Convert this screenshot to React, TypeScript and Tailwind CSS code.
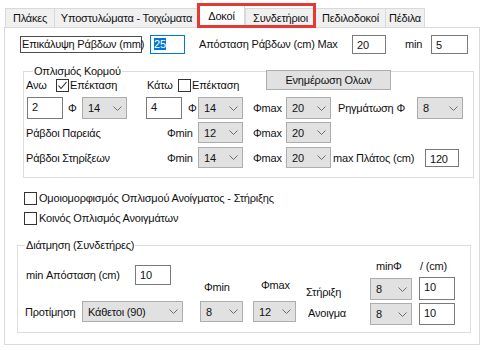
import React from 'react';

const Sel = ({ value, size }: { value: string; size: string }) => (
  <div className={`${size} flex items-center justify-between bg-[#e1e1e1] border border-[#adadad] pl-[5px] pr-[4px] shrink-0`}>
    <span>{value}</span>
    <svg width="9" height="5" viewBox="0 0 9 5">
      <polyline points="0.5,0.5 4.5,4.5 8.5,0.5" fill="none" stroke="#6d6d6d" strokeWidth="1" />
    </svg>
  </div>
);

const Inp = ({ value, size }: { value: string; size: string }) => (
  <div className={`${size} bg-white border border-[#7a7a7a] pl-[4px] pt-[2px] shrink-0`}>{value}</div>
);

const Chk = ({ checked = false }: { checked?: boolean }) => (
  <div className="w-[13px] h-[13px] border border-[#333] bg-white shrink-0 flex items-center justify-center">
    {checked && (
      <svg width="11" height="11" viewBox="0 0 11 11">
        <polyline points="1.5,5.5 4,8.5 9.5,2" fill="none" stroke="#222" strokeWidth="1.1" />
      </svg>
    )}
  </div>
);

const tabs = [
  { label: 'Πλάκες', w: 'w-[49px]' },
  { label: 'Υποστυλώματα - Τοιχώματα', w: 'w-[144px]' },
  { label: 'Δοκοί', w: 'w-[47px]', active: true },
  { label: 'Συνδετήριοι', w: 'w-[70px]' },
  { label: 'Πεδιλοδοκοί', w: 'w-[70px]' },
  { label: 'Πέδιλα', w: 'w-[40px]', last: true },
];

export default function App() {
  return (
    <div className="relative w-[486px] h-[350px] overflow-hidden whitespace-nowrap bg-white text-[11px] leading-[14px] tracking-[-0.2px] text-[#111] font-['Liberation_Sans',Arial,sans-serif]">
      {/* tab strip */}
      <div className="flex items-end h-[27px] pl-[5px]">
        {tabs.map(t =>
          t.active ? (
            <div key={t.label} className={`${t.w} relative z-10 h-[23px] -mb-px bg-white border-x border-t border-[#d9d9d9] flex items-center justify-center pb-[3px]`}>
              {t.label}
            </div>
          ) : (
            <div key={t.label} className={`${t.w} h-[19px] bg-[#f0f0f0] border-t border-l border-[#d9d9d9] ${t.last ? 'border-r' : ''} flex items-center justify-center`}>
              {t.label}
            </div>
          )
        )}
      </div>

      {/* panel */}
      <div className="ml-[4px] w-[476px] h-[318px] border border-[#d9d9d9] bg-white">
        <div className="flex items-center mt-[7px] h-[18px]">
          <div className="ml-[15px] w-[122px] h-[17px] border border-[#4d4d4d] leading-[15px] pl-[1px]">Επικάλυψη Ράβδων (mm)</div>
          <div className="ml-[8px] w-[35px] h-[19px] border border-[#0078d7] pl-[3px] pt-[1px]">
            <span className="bg-[#0078d7] text-white">25</span>
          </div>
          <div className="ml-[14px] w-[153px]">Απόσταση Ράβδων (cm) Max</div>
          <Inp value="20" size="w-[34px] h-[19px]" />
          <div className="ml-[19px] w-[26px]">min</div>
          <Inp value="5" size="w-[37px] h-[19px]" />
        </div>

        {/* Οπλισμός Κορμού */}
        <div className="relative ml-[18px] mt-[18px] w-[451px] h-[107px] border border-[#dcdcdc]">
          <div className="absolute left-[9px] -top-[8px] bg-white px-[1px]">Οπλισμός Κορμού</div>

          <div className="flex items-center h-[14px] mt-[6px]">
            <div className="ml-[2px] w-[30px]">Ανω</div>
            <Chk checked />
            <div className="ml-[1px] w-[77px]">Επέκταση</div>
            <div className="w-[31px]">Κάτω</div>
            <Chk />
            <div className="ml-[1px] w-[74px]">Επέκταση</div>
            <div className="self-end mb-[2px] w-[125px] h-[20px] shrink-0 bg-[#e1e1e1] border border-[#adadad] flex items-center justify-center">
              Ενημέρωση Ολων
            </div>
          </div>

          <div className="flex items-center h-[22px] mt-[5px]">
            <div className="ml-[3px]" />
            <Inp value="2" size="w-[36px] h-[22px]" />
            <div className="w-[19px] pl-[5px]">Φ</div>
            <Sel value="14" size="w-[45px] h-[22px]" />
            <div className="ml-[19px]" />
            <Inp value="4" size="w-[36px] h-[22px]" />
            <div className="w-[16px] pl-[6px]">Φ</div>
            <Sel value="14" size="w-[45px] h-[22px]" />
            <div className="ml-[10px] w-[33px]">Φmax</div>
            <Sel value="20" size="w-[45px] h-[22px]" />
            <div className="ml-[7px] w-[79px]">Ρηγμάτωση Φ</div>
            <Sel value="8" size="w-[46px] h-[22px]" />
          </div>

          <div className="flex items-center h-[21px] mt-[3px]">
            <div className="ml-[2px] w-[141px]">Ράβδοι Παρειάς</div>
            <div className="w-[31px]">Φmin</div>
            <Sel value="12" size="w-[45px] h-[21px]" />
            <div className="ml-[10px] w-[33px]">Φmax</div>
            <Sel value="20" size="w-[45px] h-[21px]" />
          </div>

          <div className="flex items-center h-[21px] mt-[4px]">
            <div className="ml-[2px] w-[141px]">Ράβδοι Στηρίξεων</div>
            <div className="w-[31px]">Φmin</div>
            <Sel value="14" size="w-[45px] h-[21px]" />
            <div className="ml-[10px] w-[33px]">Φmax</div>
            <Sel value="20" size="w-[45px] h-[21px]" />
            <div className="ml-[2px] w-[92px]">max Πλάτος (cm)</div>
            <Inp value="120" size="w-[34px] h-[18px]" />
          </div>
        </div>

        <div className="flex items-center mt-[13px] h-[14px]">
          <div className="ml-[19px]" />
          <Chk />
          <div className="ml-[2px]">Ομοιομορφισμός Οπλισμού Ανοίγματος - Στήριξης</div>
        </div>
        <div className="flex items-center mt-[6px] h-[14px]">
          <div className="ml-[19px]" />
          <Chk />
          <div className="ml-[2px]">Κοινός Οπλισμός Ανοιγμάτων</div>
        </div>

        {/* Διάτμηση */}
        <div className="relative ml-[12px] mt-[20px] w-[454px] h-[88px] border border-[#dcdcdc]">
          <div className="absolute left-[7px] -top-[8px] bg-white px-[1px]">Διάτμηση (Συνδετήρες)</div>
          <div className="flex items-start">
            <div className="ml-[7px] w-[158px] flex flex-col">
              <div className="flex items-center mt-[19px] h-[20px]">
                <div className="w-[110px] pl-[1px]">min Απόσταση (cm)</div>
                <Inp value="10" size="w-[36px] h-[20px]" />
              </div>
              <div className="flex items-center mt-[16px] h-[21px]">
                <div className="w-[57px]">Προτίμηση</div>
                <Sel value="Κάθετοι (90)" size="w-[101px] h-[21px]" />
              </div>
            </div>
            <div className="ml-[17px] w-[43px] flex flex-col">
              <div className="mt-[34px] pl-[4px]">Φmin</div>
              <div className="mt-[7px]"><Sel value="8" size="w-[43px] h-[21px]" /></div>
            </div>
            <div className="ml-[10px] w-[43px] flex flex-col">
              <div className="mt-[32px] pl-[8px]">Φmax</div>
              <div className="mt-[9px]"><Sel value="12" size="w-[43px] h-[21px]" /></div>
            </div>
            <div className="ml-[10px] w-[64px] flex flex-col">
              <div className="mt-[39px]">Στήριξη</div>
              <div className="mt-[7px] pl-[2px]">Ανοιγμα</div>
            </div>
            <div className="w-[42px] flex flex-col">
              <div className="mt-[13px] pl-[6px]">minΦ</div>
              <div className="mt-[5px]"><Sel value="8" size="w-[42px] h-[22px]" /></div>
              <div className="mt-[3px]"><Sel value="8" size="w-[42px] h-[22px]" /></div>
            </div>
            <div className="ml-[7px] w-[36px] flex flex-col">
              <div className="mt-[13px] pl-[1px]">/ (cm)</div>
              <div className="mt-[4px]"><Inp value="10" size="w-[36px] h-[23px]" /></div>
              <div className="mt-[3px]"><Inp value="10" size="w-[36px] h-[22px]" /></div>
            </div>
          </div>
        </div>
      </div>

      {/* red highlight around tabs */}
      <div className="absolute left-[197px] top-[3px] w-[119px] h-[25px] border-[3px] border-[#e53935] z-20 pointer-events-none" />
    </div>
  );
}
